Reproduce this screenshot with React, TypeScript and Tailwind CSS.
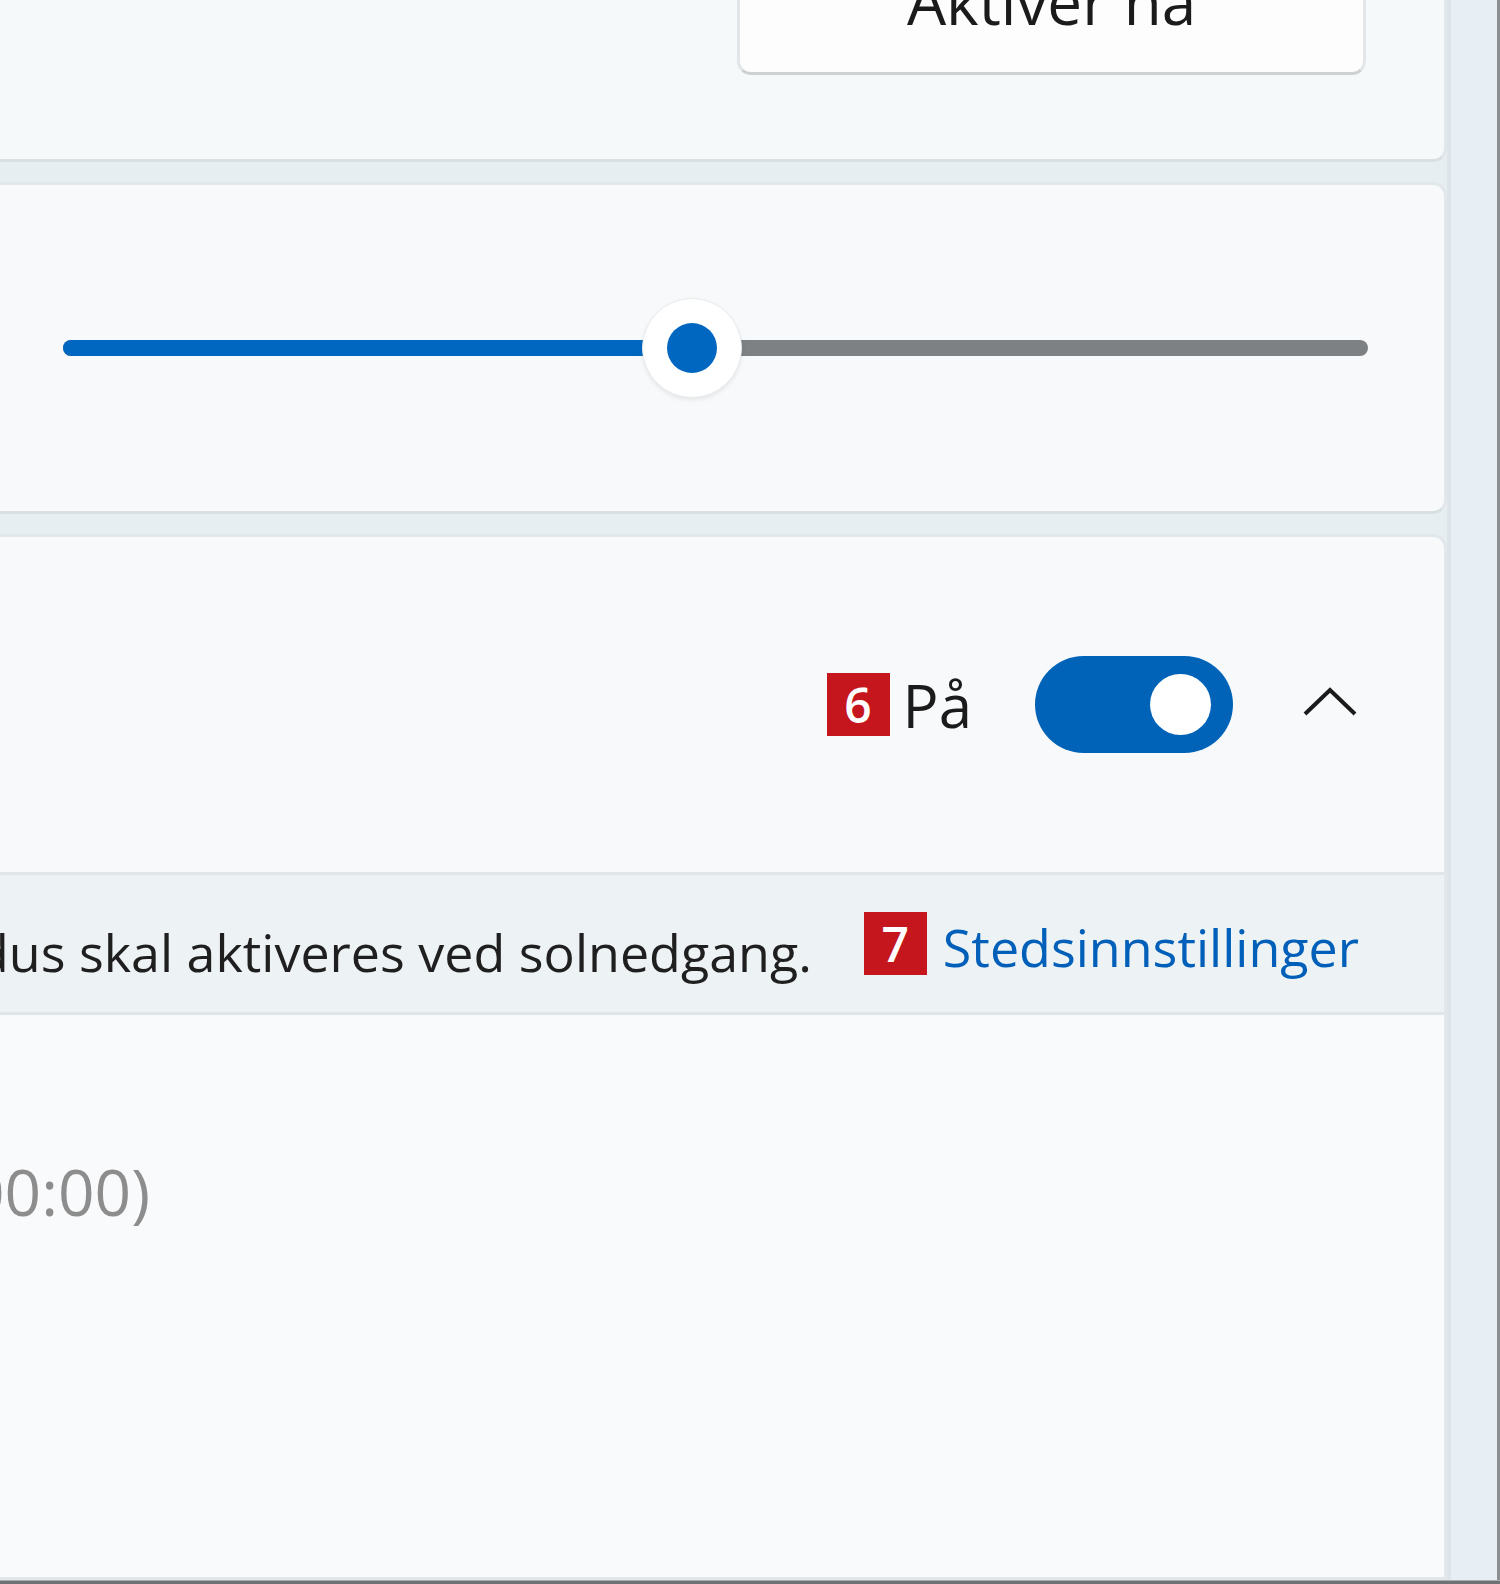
import React from 'react';

// ── Shared bits ──────────────────────────────────────────────────────────────

const font = { fontFamily: '"Open Sans", "Noto Sans", sans-serif' };

function Badge({ n }: { n: string }) {
  return (
    <span className="w-[63px] h-[63px] bg-[#c4161c] text-white flex items-center justify-center text-[48px] font-semibold leading-none shrink-0">
      {n}
    </span>
  );
}

// ── Cards ────────────────────────────────────────────────────────────────────

function ActivateCard() {
  return (
    <div className="bg-[#f6f9fa] border-[3px] border-[#e1e7ea] border-b-[#d9e0e3] rounded-[14px] pt-[12px] pb-[84px] pr-[78px] flex justify-end">
      <button className="w-[629px] h-[120px] bg-[#fdfdfd] border-[3px] border-[#e3e6e8] border-b-[#cdd1d4] rounded-[14px] text-[#1b1b1b] text-[62px] leading-none flex justify-center items-start pt-[12px]">
        Aktiver nå
      </button>
    </div>
  );
}

function StrengthCard() {
  return (
    <div className="h-[332px] bg-[#f7f9fa] border-[3px] border-[#e1e7ea] border-b-[#d9e0e3] rounded-[14px] pl-[100px] pr-[76px] flex items-center">
      <div className="relative flex-1 h-[16px] rounded-full bg-[#7d8183]">
        <div className="absolute left-0 top-0 h-full w-[629px] rounded-full bg-[#0067c0]" />
        <div className="absolute left-[579px] -top-[42px] w-[100px] h-[100px] rounded-full bg-white border border-[#e8ebed] shadow-[0_2px_4px_rgba(0,0,0,0.08)] flex items-center justify-center">
          <div className="w-[50px] h-[50px] rounded-full bg-[#0067c0]" />
        </div>
      </div>
    </div>
  );
}

function ScheduleCard() {
  return (
    <div className="bg-[#f7f9fb] border-[3px] border-[#e1e7ea] rounded-t-[14px] flex flex-col flex-1">
      {/* header row */}
      <div className="h-[335px] flex items-center justify-end pr-[87px]">
        <Badge n="6" />
        <span className="ml-[13px] text-[60px] leading-none text-[#1b1b1b]">På</span>
        <div className="ml-[63px] w-[198px] h-[97px] rounded-full bg-[#0063b8] flex items-center justify-end pr-[22px]">
          <div className="w-[61px] h-[61px] rounded-full bg-white" />
        </div>
        <svg className="ml-[70px] -mt-[8px]" width="54" height="30" viewBox="0 0 54 30" fill="none">
          <path d="M2 28 L27 4 L52 28" stroke="#1b1b1b" strokeWidth="4" strokeLinejoin="miter" />
        </svg>
      </div>

      {/* location strip */}
      <div className="h-[143px] bg-[#edf2f5] border-y-[3px] border-[#dfe5e8] flex items-center justify-end pr-[85px]">
        <span className="whitespace-nowrap shrink-0 text-[52px] text-[#1f1f1f] leading-none pt-[16px]">
          Slå på plasseringstjenester for å planlegge at nattmodus skal aktiveres ved solnedgang.
        </span>
        <span className="ml-[52px]">
          <Badge n="7" />
        </span>
        <span className="ml-[16px] whitespace-nowrap text-[52px] text-[#005fb8] leading-none pt-[6px]">
          Stedsinnstillinger
        </span>
      </div>

      {/* schedule body */}
      <div className="flex-1 bg-[#f9fafb] pt-[145px]">
        <div className="w-[187px] flex justify-end">
          <span className="whitespace-nowrap shrink-0 text-[64px] text-[#8d8d8d] leading-none">
            Solnedgang til soloppgang (21:00 - 00:00)
          </span>
        </div>
      </div>
    </div>
  );
}

// ── Root export ──────────────────────────────────────────────────────────────

export default function App() {
  return (
    <div style={font} className="w-[1500px] h-[1584px] overflow-hidden bg-[#e7eef2] flex flex-col">
      <div className="flex-1 flex min-h-0">
        <div className="w-[1487px] -ml-[40px] -mt-[60px] flex flex-col gap-[20px] min-h-0">
          <ActivateCard />
          <StrengthCard />
          <ScheduleCard />
        </div>
        <div className="w-[50px] bg-[#e8eff4] border-l-[4px] border-[#dde5e9]" />
        <div className="w-[3px] bg-[#8b8f92]" />
      </div>
      <div className="h-[4px] bg-[#6e7275] border-t border-[#a9adb0]" />
    </div>
  );
}
